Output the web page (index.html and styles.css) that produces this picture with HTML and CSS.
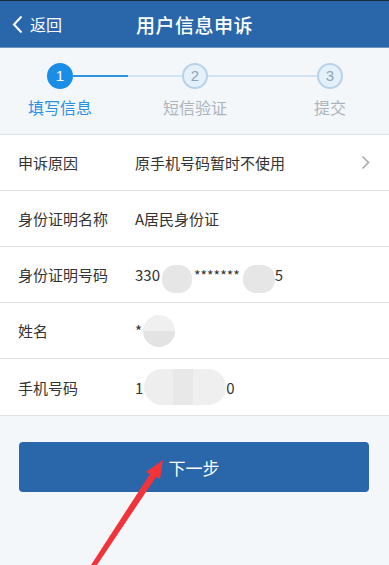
FILE: index.html
```html
<!DOCTYPE html>
<html lang="zh-CN">
<head>
  <meta charset="UTF-8" />
  <meta name="viewport" content="width=device-width, initial-scale=1.0" />
  <title>用户信息申诉</title>
  <link rel="stylesheet" href="styles.css">
</head>
<body>

  <div class="page">
    <!-- Header -->
    <div class="header">
      <a class="back" href="#">
        <svg width="11" height="19" viewBox="0 0 11 19"><path d="M9.5 1.5 L2 9.5 L9.5 17.5" fill="none" stroke="#fff" stroke-width="2"/></svg>
        <span>返回</span>
      </a>
      <h1>用户信息申诉</h1>
    </div>

    <!-- Steps -->
    <div class="steps">
      <div class="step active">
        <div class="dot">1</div>
        <div class="label">填写信息</div>
      </div>
      <div class="link half"></div>
      <div class="step">
        <div class="dot">2</div>
        <div class="label">短信验证</div>
      </div>
      <div class="link"></div>
      <div class="step">
        <div class="dot">3</div>
        <div class="label">提交</div>
      </div>
    </div>

    <!-- Form rows -->
    <div class="form">
      <div class="row">
        <span class="key">申诉原因</span>
        <span class="val">原手机号码暂时不使用</span>
        <svg class="chev" width="9" height="15" viewBox="0 0 9 15"><path d="M1.5 1.5 L7.5 7.5 L1.5 13.5" fill="none" stroke="#aaa" stroke-width="1.6"/></svg>
      </div>
      <div class="row">
        <span class="key">身份证明名称</span>
        <span class="val">A居民身份证</span>
      </div>
      <div class="row">
        <span class="key">身份证明号码</span>
        <span class="val">330<i class="blur b1"></i><span class="stars">*******</span><i class="blur b2"></i>5</span>
      </div>
      <div class="row">
        <span class="key">姓名</span>
        <span class="val">*<i class="blur b3"></i></span>
      </div>
      <div class="row">
        <span class="key">手机号码</span>
        <span class="val">1<i class="blur b4"></i>0</span>
      </div>
    </div>

    <div class="actions">
      <button class="next">下一步</button>
    </div>

    <!-- red annotation arrow -->
    <svg class="arrow" width="90" height="125" viewBox="0 0 90 125">
      <path d="M83 20 L80 39 L76 37 L17 125 L11 125 L70 34 L66 32 Z" fill="#f3333a"/>
    </svg>
  </div>

</body>
</html>
```

FILE: styles.css
```css
body {
  margin: 0;
  font-family: "Noto Sans CJK SC", "Liberation Sans", sans-serif;
  background-color: #f4f7f9;
  color: #333;
}

.page {
  position: relative;
  height: 565px;
  overflow: hidden;
}

/* Header */
.header {
  height: 46px;
  background-color: #2a66aa;
  border-top: 1px solid #1a2a3a;
  border-bottom: 1px solid #6f95c1;
  display: flex;
  align-items: center;
  justify-content: center;
  position: relative;
}

.back {
  position: absolute;
  left: 12px;
  top: 13px;
  display: flex;
  align-items: center;
  gap: 7px;
  color: #fff;
  text-decoration: none;
  font-size: 16px;
  line-height: 20px;
}

.header h1 {
  margin: 0;
  color: #fff;
  font-size: 19px;
  font-weight: 500;
  letter-spacing: 0.5px;
}

/* Steps */
.steps {
  display: flex;
  padding: 15px 46px 16px 47px;
  border-bottom: 1px solid #dde1e4;
}

.step {
  width: 26px;
  display: flex;
  flex-direction: column;
  align-items: center;
}

.dot {
  width: 22px;
  height: 22px;
  border-radius: 50%;
  border: 2px solid #b7d2e8;
  background-color: #e4f0fa;
  color: #8ea4b8;
  font-family: "Liberation Sans", sans-serif;
  font-size: 15px;
  line-height: 22px;
  text-align: center;
}

.step.active .dot {
  border-color: #1a8de6;
  background-color: #1a8de6;
  color: #fff;
}

.label {
  margin-top: 7px;
  white-space: nowrap;
  font-size: 16px;
  line-height: 22px;
  color: #a9b4be;
}

.step.active .label {
  color: #2b92e2;
}

.link {
  flex: 1;
  height: 2px;
  margin-top: 12px;
  background-color: #d2e4f2;
}

.link.half {
  background: linear-gradient(to right, #2f92e2 50%, #d2e4f2 50%);
}

/* Form */
.form {
  background-color: #fff;
}

.row {
  height: 55px;
  display: flex;
  align-items: center;
  padding: 0 19px 0 18px;
  border-bottom: 1px solid #e2e2e2;
  font-size: 15px;
}

.row:last-child {
  height: 56px;
}

.key {
  width: 117px;
  flex-shrink: 0;
}

.val {
  flex: 1;
  display: flex;
  align-items: center;
  white-space: nowrap;
}

.chev {
  flex-shrink: 0;
}

.stars {
  font-size: 14px;
}

.blur {
  display: inline-block;
  background-color: #e6e6e6;
}

.b1 {
  width: 30px;
  height: 28px;
  border-radius: 13px;
  margin: 8px 2px 0 2px;
}

.b2 {
  width: 32px;
  height: 28px;
  border-radius: 13px;
  margin: 8px 0 0 3px;
}

.b3 {
  width: 32px;
  height: 32px;
  border-radius: 50%;
  margin-left: 1px;
  background: linear-gradient(#f0f0f0 50%, #e3e3e3 50%);
}

.b4 {
  width: 82px;
  height: 36px;
  border-radius: 18px;
  margin-left: 1px;
  background: linear-gradient(to right, #eeeeee 35%, #e8e8e8 35%, #e8e8e8 60%, #efefef 60%);
}

/* Button */
.actions {
  padding: 26px 20px 0 19px;
}

.next {
  width: 100%;
  height: 50px;
  border: none;
  border-radius: 4px;
  background-color: #2a66aa;
  color: #fff;
  font-family: inherit;
  font-size: 17px;
  cursor: pointer;
}

.arrow {
  position: absolute;
  left: 80px;
  top: 440px;
}
```
